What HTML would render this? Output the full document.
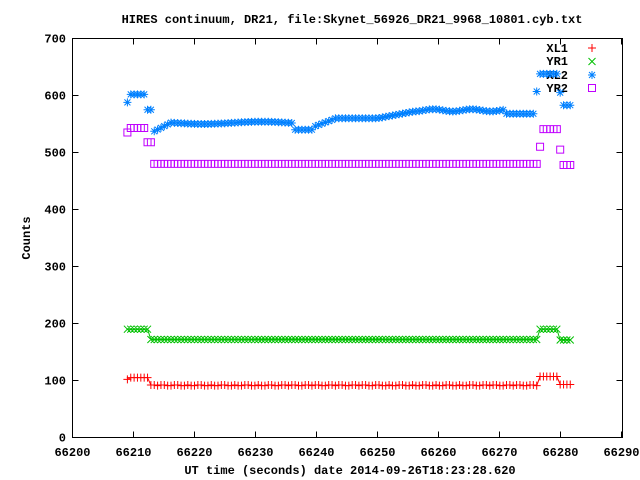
<!DOCTYPE html>
<html><head><meta charset="utf-8"><style>
html,body{margin:0;padding:0;background:#fff;width:640px;height:480px;overflow:hidden}
svg text{font-family:"Liberation Mono","DejaVu Sans Mono",monospace;font-weight:bold;font-size:12px;fill:#000}
</style></head><body>
<svg id="s" width="640" height="480" xmlns="http://www.w3.org/2000/svg">
<rect x="0" y="0" width="640" height="480" fill="#fff"/>
<text x="352" y="23" text-anchor="middle">HIRES continuum, DR21, file:Skynet_56926_DR21_9968_10801.cyb.txt</text>
<g id="axes" stroke="#000" stroke-width="1" fill="none"></g>
<g id="lab"></g>
<text x="350" y="474" text-anchor="middle">UT time (seconds) date 2014-09-26T18:23:28.620</text>
<text transform="translate(30,238) rotate(-90)" text-anchor="middle">Counts</text>
<text x="568" y="52" text-anchor="end">XL1</text>
<text x="568" y="65" text-anchor="end">YR1</text>
<text x="568" y="79" text-anchor="end">XL2</text>
<text x="568" y="92" text-anchor="end">YR2</text>
<g id="pts" fill="none" stroke-width="1"></g>
</svg>
<script>
var NS="http://www.w3.org/2000/svg";
function el(p,t,a){var e=document.createElementNS(NS,t);for(var k in a)e.setAttribute(k,a[k]);p.appendChild(e);return e;}
var ax=document.getElementById('axes'),lab=document.getElementById('lab'),pts=document.getElementById('pts');
var L=72.5,R=622.5,T=38.5,B=437.5;
el(ax,'rect',{x:L,y:T,width:R-L,height:B-T});
var d='';
for(var i=0;i<=9;i++){var x=L+i*61;d+='M'+x+' '+B+'v-6M'+x+' '+T+'v6';
 var tt=el(lab,'text',{x:x,y:456,'text-anchor':'middle'});tt.textContent=66200+i*10;}
for(var j=0;j<=7;j++){var y=B-j*57;d+='M'+L+' '+y+'h6M'+R+' '+y+'h-6';
 var t2=el(lab,'text',{x:66,y:y+4,'text-anchor':'end'});t2.textContent=j*100;}
el(ax,'path',{d:d});
function px(t){return L+(t-200)*6.1;}
function py(v){return B-v*0.57;}
function xl1(t){if(t<212.7)return t<209.5?102:105;if(t<276.3)return 91+((t*7)%3>1.5?1:0);if(t<279.6)return 107;return 93;}
function yr1(t){if(t<212.7)return 190;if(t<276.3)return 172;if(t<279.8)return 190;return 171;}
function xl2(t){if(t<209.4)return 588;if(t<212.3)return 602;if(t<213)return 575;if(t<216)return 535+(t-213)*5.5;
 if(t<236.5)return 552+2*Math.sin(t/3);if(t<239.5)return 540;if(t<243)return 545+(t-239.5)*4;if(t<250)return 560;
 if(t<256)return 560+(t-250)*2;if(t<271)return 574+2*Math.sin(t);if(t<276)return 568;if(t<276.5)return 607;if(t<279.6)return 638;if(t<280.3)return 605;return 583;}
function yr2(t){if(t<209.4)return 535;if(t<212.3)return 543;if(t<213)return 518;if(t<276.3)return 480;if(t<276.8)return 510;if(t<279.6)return 541;if(t<280.3)return 505;return 478;}
var s1='',s2='',s3='',s4='',l1='',l2='';
for(var t=209;t<=281.7;t+=0.55){var x=px(t);
 var y=py(xl1(t));s1+='M'+(x-4)+' '+y+'h8M'+x+' '+(y-4)+'v8';l1+=(l1?'L':'M')+x+' '+y;
 y=py(yr1(t));s2+='M'+(x-3.5)+' '+(y-3.5)+'l7 7M'+(x-3.5)+' '+(y+3.5)+'l7 -7';l2+=(l2?'L':'M')+x+' '+y;
 y=py(xl2(t));s3+='M'+(x-4)+' '+y+'h8M'+x+' '+(y-4)+'v8M'+(x-3)+' '+(y-3)+'l6 6M'+(x-3)+' '+(y+3)+'l6 -6';
 y=py(yr2(t));s4+='M'+(x-3.5)+' '+(y-3.5)+'h7v7h-7z';}
el(pts,'path',{d:l1,stroke:'#ff0000'});
el(pts,'path',{d:l2,stroke:'#00c000'});
el(pts,'path',{d:s1,stroke:'#ff0000'});
el(pts,'path',{d:s2,stroke:'#00c000'});
el(pts,'path',{d:s3,stroke:'#0080ff'});
el(pts,'path',{d:s4,stroke:'#c000ff'});
var lx=592;
el(pts,'path',{d:'M'+(lx-4)+' 48h8M'+lx+' 44v8',stroke:'#ff0000'});
el(pts,'path',{d:'M'+(lx-3.5)+' 58l7 7M'+(lx-3.5)+' 65l7 -7',stroke:'#00c000'});
el(pts,'path',{d:'M'+(lx-4)+' 75h8M'+lx+' 71v8M'+(lx-3)+' 72l6 6M'+(lx-3)+' 78l6 -6',stroke:'#0080ff'});
el(pts,'path',{d:'M'+(lx-3.5)+' 84.5h7v7h-7z',stroke:'#c000ff'});
</script>
</body></html>
